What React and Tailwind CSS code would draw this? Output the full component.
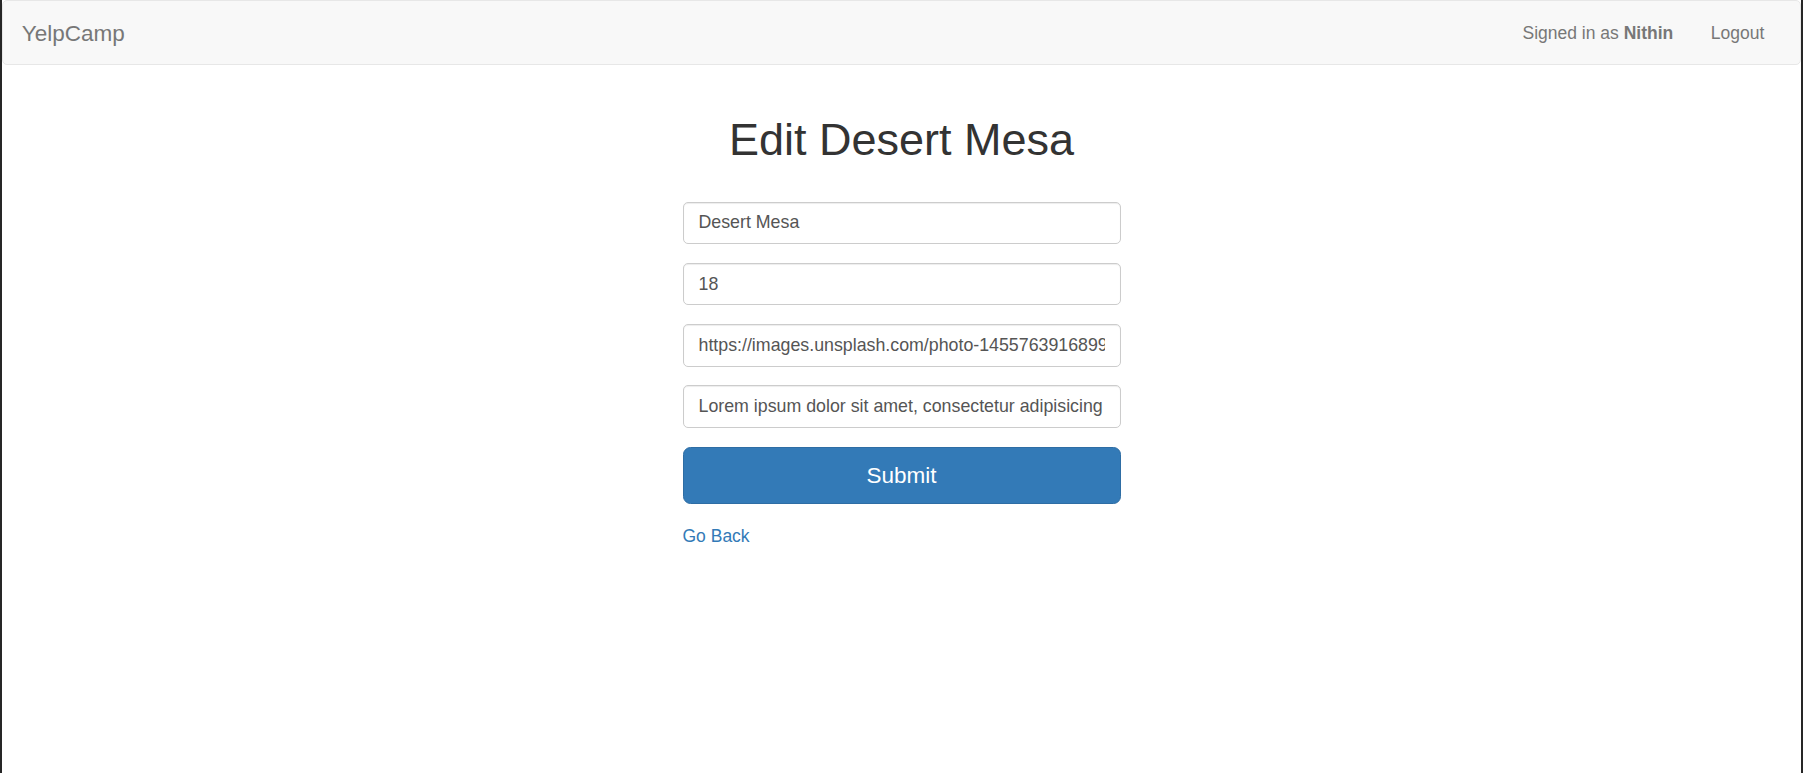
import React from "react";

const fields = [
    "Desert Mesa",
    "18",
    "https://images.unsplash.com/photo-1455763916899-e8b50eca9967?auto=format&fit=crop&w=1050&q=80",
    "Lorem ipsum dolor sit amet, consectetur adipisicing elit, sed do eiusmod tempor incididunt ut labore et dolore magna aliqua.",
];

export default function App() {
    return (
        <div className="h-[773px] w-full bg-white border-x-2 border-[#262626] font-['Liberation_Sans',Arial,sans-serif] text-[17.5px] text-[#333] overflow-hidden">
            {/* Navbar */}
            <nav className="h-[65px] bg-[#f8f8f8] border border-[#e7e7e7] rounded-[5px] flex items-start justify-between">
                <a className="px-[18.75px] pt-[19.5px] text-[22.5px] leading-[25px] text-[#777]">YelpCamp</a>
                <ul className="flex mr-[17px]">
                    <li>
                        <a className="block px-[18.75px] pt-[19.75px] leading-[25px] text-[#777]">
                            Signed in as <strong className="font-bold">Nithin</strong>
                        </a>
                    </li>
                    <li>
                        <a className="block px-[18.75px] pt-[19.75px] leading-[25px] text-[#777]">Logout</a>
                    </li>
                </ul>
            </nav>

            {/* Edit form */}
            <div className="flex flex-col items-center">
                <h1 className="mt-[50px] mb-[37px] text-[45px] leading-[49.5px] font-normal text-[#333]">
                    Edit Desert Mesa
                </h1>
                <form className="w-[438px] flex flex-col">
                    {fields.map((value, i) => (
                        <div key={i} className="mb-[18.75px]">
                            <input
                                type="text"
                                defaultValue={value}
                                className="w-full h-[42.5px] px-[15px] py-[7.5px] bg-white border border-[#ccc] rounded-[5px] shadow-[inset_0_1px_1px_rgba(0,0,0,0.075)] text-[17.8px] text-[#555] outline-none"
                            />
                        </div>
                    ))}
                    <div className="mb-[18.75px]">
                        <button
                            type="button"
                            className="w-full h-[57px] pt-[2px] bg-[#337ab7] border border-[#2e6da4] rounded-[7.5px] text-white text-[22.5px] leading-[30px]"
                        >
                            Submit
                        </button>
                    </div>
                    <div className="pt-[2px] leading-[25px]">
                        <a className="text-[#337ab7]">Go Back</a>
                    </div>
                </form>
            </div>
        </div>
    );
}
